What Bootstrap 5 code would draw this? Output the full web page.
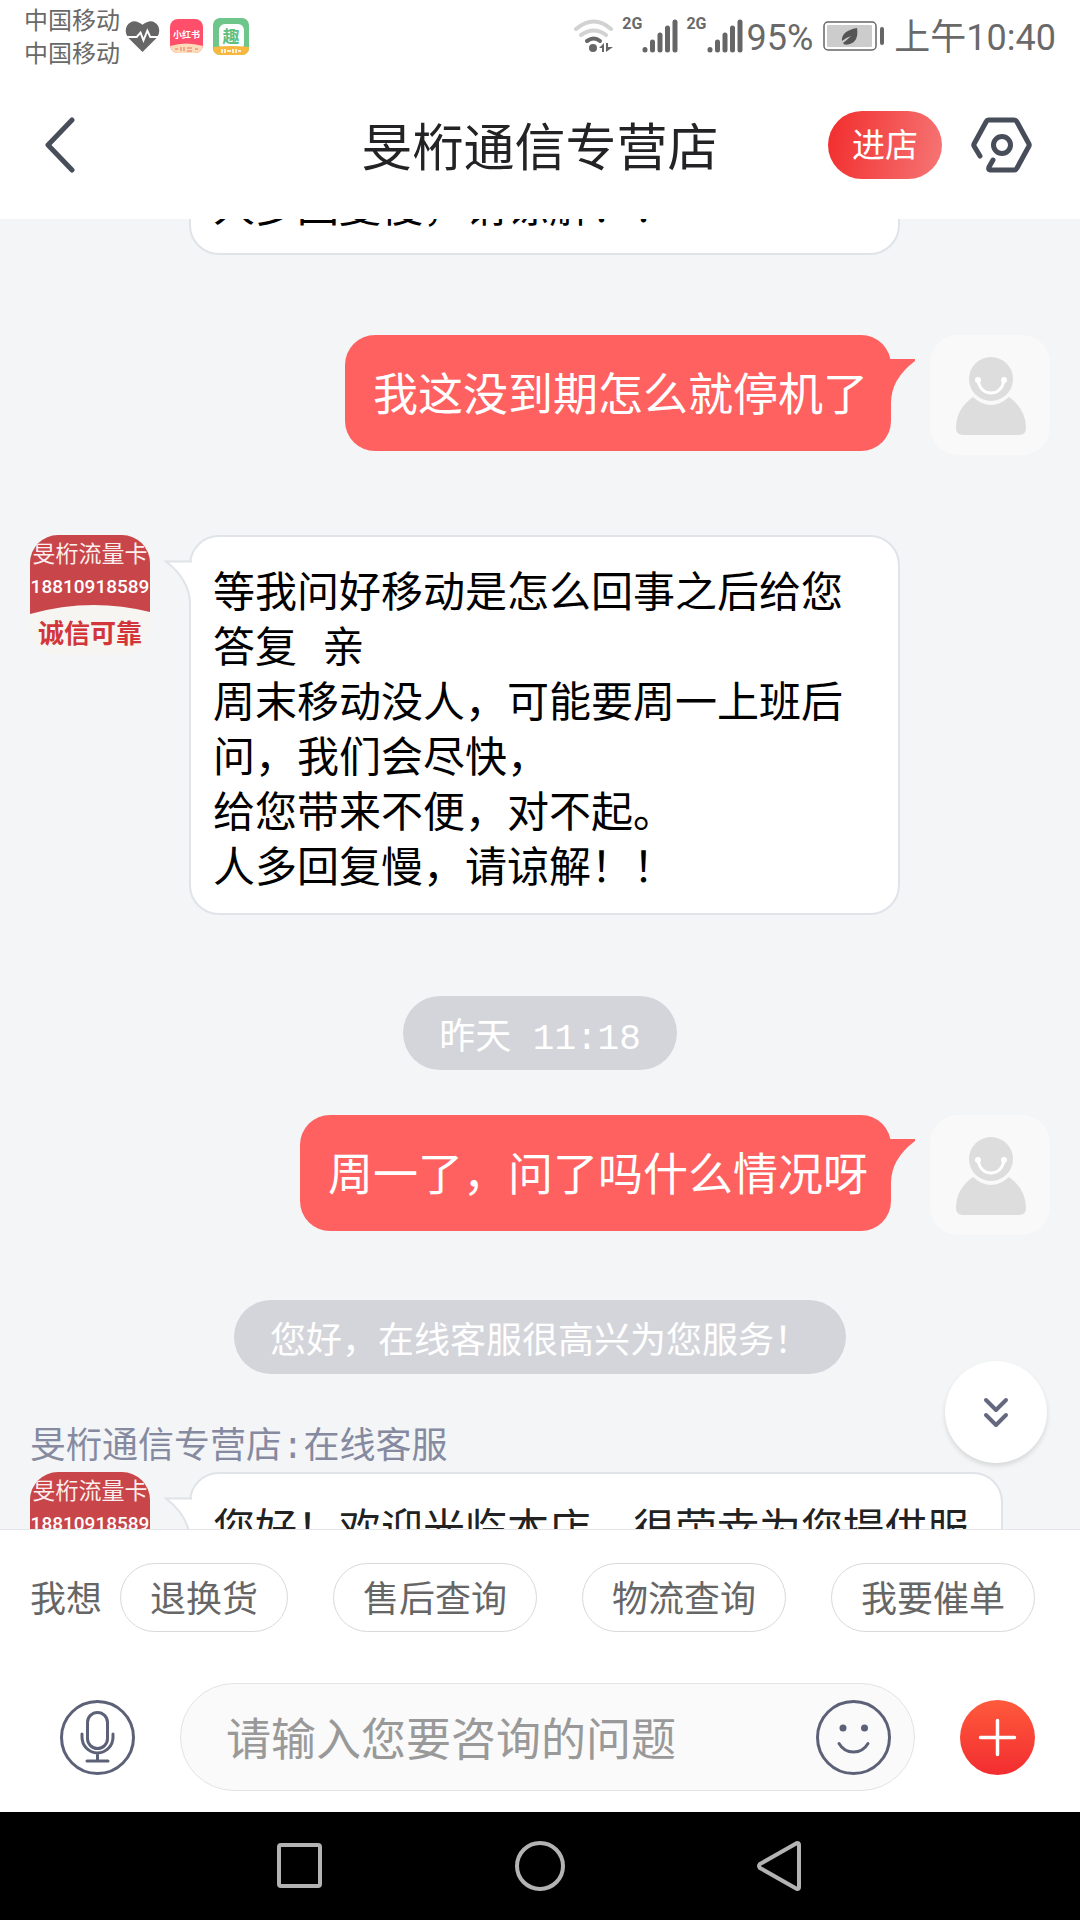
<!DOCTYPE html>
<html lang="zh-CN">
<head>
<meta charset="utf-8">
<meta name="viewport" content="width=device-width, initial-scale=1">
<title>旻桁通信专营店</title>
<link href="https://cdn.jsdelivr.net/npm/bootstrap@5.3.0/dist/css/bootstrap.min.css" rel="stylesheet">
<style>
  body { font-family: Roboto, "Noto Sans CJK SC", sans-serif; background: #fff; color: #262626; }
  svg { display: block; flex: none; }
  .status-bar { height: 72px; padding: 0 24px; color: #696969; font-size: 36px; line-height: 54px; }
  .status-text { padding-top: 4px; }
  .carrier { font-size: 24px; line-height: 33px; padding-top: 4px; }
  .net-type { font-size: 16px; line-height: 16px; font-weight: 700; padding-top: 1px; }
  .gap-health { margin-left: 5px; }
  .gap-app { margin-left: 10px; }
  .battery { margin: 0 9px 0 10px; }
  .title-bar { height: 147px; padding: 0 48px 2px 44px; }
  .title-side { flex: 1 1 0; }
  .shop-title { font-size: 51px; line-height: 60px; font-weight: 400; color: #232326; padding: 8px 0 0 4px; }
  .enter-shop { font-size: 33px; line-height: 66px; padding: 2px 24px 0; color: #fff; border-radius: 34px; background: linear-gradient(100deg, #f23030 5%, #f67272 95%); }
  .settings-btn { margin-left: 29px; }
  .plain-btn { border: 0; background: none; padding: 0; }
  .chat { background: #f3f5f7; min-height: 0; overflow: hidden; font-family: "Liberation Mono", "Noto Sans CJK SC", monospace; }
  .msg { padding: 0 30px; }
  .msg + .msg, .msg + .tip { margin-top: 80px; }
  .bubble { border: 2px solid #e0e3e8; background: #fff; color: #000; border-radius: 30px; font-size: 42px; line-height: 55px; padding: 32px 22px 14px; max-width: 711px; }
  .bubble-wide { max-width: 814px; color: #222; }
  .bubble-mine { border: 0; background: #ff6161; color: #fff; font-size: 45px; line-height: 60px; padding: 35px 23px 21px 28px; margin-right: 39px; }
  .bubble-shop { margin-left: 39px; }
  .bubble-rest { margin-top: -69px; margin-left: 159px; }
  .tail { position: absolute; top: 22px; }
  .tail-left { left: -28px; }
  .tail-right { right: -24px; }
  .tip { align-self: center; border-radius: 37px; background: #d4d5db; color: #fff; font-size: 36px; line-height: 54px; padding: 17px 36px 3px; }
  .tip + .msg { margin-top: 45px; }
  .msg + .tip { margin-top: 81px; }
  .msg + .tip-hello { margin-top: 65px; }
  .sender { padding: 0 30px; margin-top: 52px; font-size: 36px; line-height: 46px; color: #858aa0; }
  .to-latest { position: absolute; right: 33px; bottom: 66px; width: 102px; height: 102px; background: #fff; box-shadow: 0 3px 5px rgba(0,0,0,.12); }
  .composer { border-top: 1px solid #e4e5e8; }
  .quick { padding: 33px 30px 0; font-size: 36px; color: #666; }
  .quick-label { line-height: 61px; padding-top: 6px; }
  .chips { gap: 45px; margin-left: 18px; }
  .chip { border: 1px solid #d9d9d9; background: #fff; color: #666; border-radius: 35px; padding: 6px 29px 0; line-height: 61px; white-space: nowrap; }
  .entry-row { padding: 51px 45px 21px 60px; gap: 45px; }
  .entry { height: 108px; border: 1px solid #e3e3e3; border-radius: 54px; background: #fafafa; padding: 0 23px 0 45px; }
  .entry input { border: 0; background: none; outline: 0; min-width: 0; font-size: 45px; line-height: 60px; padding: 7px 0 0; color: #262626; }
  .entry input::placeholder { color: #999; opacity: 1; }
  .nav-keys { background: #000; height: 108px; gap: 188px; }
</style>
</head>
<body>
<svg width="0" height="0" class="position-absolute" aria-hidden="true">
  <defs>
    <clipPath id="round"><rect width="120" height="120" rx="28"/></clipPath>
    <linearGradient id="plusFill" x1="0" y1="0" x2="0" y2="1"><stop offset="0" stop-color="#ff5a3c"/><stop offset="1" stop-color="#f22d30"/></linearGradient>
    <symbol id="shopAvatar" viewBox="0 0 120 120">
      <g clip-path="url(#round)">
        <rect width="120" height="120" fill="#f6f5f1"/>
        <path d="M0 0H120V77Q60 62 0 79Z" fill="#c84549"/>
        <g text-anchor="middle" font-family="'Noto Sans CJK SC', sans-serif">
          <text x="60" y="27" font-size="23" fill="#fbeeee">旻桁流量卡</text>
          <text x="60" y="58" font-size="19" font-weight="500" fill="#fff" font-family="Roboto, sans-serif">18810918589</text>
          <text x="60" y="108" font-size="26" font-weight="700" fill="#d2353a">诚信可靠</text>
        </g>
      </g>
    </symbol>
    <symbol id="userAvatar" viewBox="0 0 120 120">
      <rect width="120" height="120" rx="28" fill="#f9f9f9"/>
      <circle cx="61" cy="44" r="22" fill="#ddd"/>
      <path d="M43 62Q26 74 26 93Q26 100 33 100H89Q96 100 96 93Q96 74 79 62Q61 78 43 62Z" fill="#ddd"/>
      <path d="M48 46Q51 58 61 58Q71 58 74 46" fill="none" stroke="#fff" stroke-width="3"/>
      <circle cx="48" cy="45" r="3" fill="#fff"/><circle cx="74" cy="45" r="3" fill="#fff"/>
    </symbol>
    <symbol id="bars" viewBox="0 0 36 34">
      <g stroke="#666" stroke-width="5" stroke-linecap="round"><path d="M3 30.500V31M10.500 23V31M18 16V31M25.500 9V31M33 3V31"/></g>
    </symbol>
    <symbol id="tailLeft" viewBox="0 0 32 46">
      <path d="M32 3H3Q26 22 28 44H32Z" fill="#fff"/>
      <path d="M29 2.500H3Q26 20 27 44" fill="none" stroke="#e0e3e8" stroke-width="2"/>
    </symbol>
    <symbol id="tailRight" viewBox="0 0 28 46"><path d="M0 2H28V4Q4 22 4 46H0Z" fill="#ff6161"/></symbol>
  </defs>
</svg>

<div class="d-flex flex-column vh-100 overflow-hidden">
  <header>
    <div class="status-bar d-flex align-items-center">
      <div class="carrier"><div>中国移动</div><div>中国移动</div></div>
      <svg class="gap-health" width="35" height="33" viewBox="0 0 36 34" role="img" aria-label="健康">
        <path d="M18 33L3 18Q-1 12 2 6Q8-3 18 5Q28-3 34 6Q37 12 33 18Z" fill="#666"/>
        <path d="M0 17.500H12L16 13L19 21L23 11L26 17.500H36" fill="none" stroke="#fff" stroke-width="2"/>
      </svg>
      <svg class="gap-app" width="33" height="34" viewBox="0 0 33 34" role="img" aria-label="小红书">
        <defs><clipPath id="c1"><rect width="33" height="34" rx="8"/></clipPath></defs>
        <g clip-path="url(#c1)"><rect width="33" height="34" fill="#ff4f6b"/><path d="M0 27Q16 22 33 27V34H0Z" fill="#fbdcb8"/></g>
        <text x="16.500" y="19" text-anchor="middle" font-size="9" font-weight="700" fill="#fff">小红书</text>
        <path d="M5 30H8M25 30H28M11 28V32M14 28V32M17 29H22M17 32H22" stroke="#f0705f" stroke-width="1"/>
      </svg>
      <svg class="gap-app" width="36" height="37" viewBox="0 0 36 37" role="img" aria-label="趣">
        <defs><clipPath id="c2"><rect width="36" height="37" rx="7"/></clipPath></defs>
        <g clip-path="url(#c2)"><rect width="36" height="37" fill="#6fc68b"/><rect x="6" y="6" width="25" height="26" rx="6" fill="#fff"/><path d="M0 29Q18 27 36 29V37H0Z" fill="#f8b73e"/></g>
        <text x="18" y="25" text-anchor="middle" font-size="17" font-weight="700" fill="#5fbf80">趣</text>
        <path d="M9 31V35M12 31V35M14 33H18M20 31V35M23 31V35M25 33H28" stroke="#fff" stroke-width="1.500"/>
      </svg>
      <div class="ms-auto d-flex align-items-center">
        <svg width="40" height="34" viewBox="0 0 40 34" role="img" aria-label="Wi-Fi">
          <g fill="none" stroke-width="4" stroke-linecap="round"><path d="M2 10Q20-5 37 10" stroke="#d2d2d2"/><path d="M7 16Q20 7 32 16" stroke="#d2d2d2"/><path d="M13 22Q20 17 26 22" stroke="#666"/></g>
          <circle cx="19" cy="29" r="4" fill="#666"/><path d="M25 29L30 24V33H28V29ZM32 24V33L39 28H34V24Z" fill="#666"/>
        </svg>
        <span class="net-type align-self-start mt-2 ms-2">2G</span><svg width="36" height="34"><use href="#bars"/></svg>
        <span class="net-type align-self-start mt-2 ms-2">2G</span><svg width="36" height="34"><use href="#bars"/></svg>
        <span class="status-text ms-1">95%</span>
        <svg class="battery" width="62" height="30" viewBox="0 0 62 30" role="img" aria-label="电池">
          <rect x="1" y="1" width="52" height="28" rx="4" fill="none" stroke="#666" stroke-width="1.500"/><rect x="4" y="4" width="45" height="22" rx="1" fill="#ccc"/>
          <rect x="57" y="6" width="4" height="18" rx="2" fill="#666"/>
          <path d="M34 7Q36 20 27 23Q21 25 20 22Q24 19 28 15Q22 17 19 20Q18 10 34 7Z" fill="#555"/>
        </svg>
        <span class="status-text">上午10:40</span>
      </div>
    </div>
    <nav class="title-bar d-flex align-items-center">
      <div class="title-side d-flex">
        <button class="plain-btn" aria-label="返回"><svg width="31" height="56" viewBox="0 0 31 56"><path d="M28 3L4 28L28 53" fill="none" stroke="#484d5a" stroke-width="5" stroke-linecap="round" stroke-linejoin="round"/></svg></button>
      </div>
      <h1 class="shop-title m-0">旻桁通信专营店</h1>
      <div class="title-side d-flex justify-content-end align-items-center">
        <button class="enter-shop border-0 text-nowrap">进店</button>
        <button class="plain-btn settings-btn" aria-label="设置"><svg width="61" height="56" viewBox="0 0 61 56"><g fill="none" stroke="#484d5a" stroke-width="5" stroke-linecap="round" stroke-linejoin="round"><path d="M9 39L3 29Q2.500 28 3 27L15 5Q16 3 18 3H43Q45 3 46 5L58 27Q58.500 28 58 29L46 51Q45 53 43 53H19Q17 53 18 50L22 43"/><circle cx="31" cy="28" r="8.500"/></g></svg></button>
      </div>
    </nav>
  </header>

  <main class="chat position-relative flex-grow-1 d-flex flex-column">
    <div class="msg d-flex"><div class="bubble bubble-rest flex-grow-1">人多回复慢，请谅解！！</div></div>

    <div class="msg d-flex justify-content-end align-items-start">
      <div class="bubble bubble-mine position-relative">我这没到期怎么就停机了<svg class="tail tail-right" width="28" height="46"><use href="#tailRight"/></svg></div>
      <svg width="120" height="120" role="img" aria-label="我"><use href="#userAvatar"/></svg>
    </div>

    <div class="msg d-flex align-items-start">
      <svg width="120" height="120" role="img" aria-label="店铺"><use href="#shopAvatar"/></svg>
      <div class="bubble bubble-shop position-relative"><svg class="tail tail-left" width="32" height="46"><use href="#tailLeft"/></svg>等我问好移动是怎么回事之后给您答复 亲<br>周末移动没人，可能要周一上班后问，我们会尽快，<br>给您带来不便，对不起。<br>人多回复慢，请谅解！！</div>
    </div>

    <div class="tip">昨天 11:18</div>

    <div class="msg d-flex justify-content-end align-items-start">
      <div class="bubble bubble-mine position-relative">周一了，问了吗什么情况呀<svg class="tail tail-right" width="28" height="46"><use href="#tailRight"/></svg></div>
      <svg width="120" height="120" role="img" aria-label="我"><use href="#userAvatar"/></svg>
    </div>

    <div class="tip tip-hello">您好，在线客服很高兴为您服务！</div>

    <div class="sender">旻桁通信专营店:在线客服</div>
    <div class="msg d-flex align-items-start">
      <svg width="120" height="120" role="img" aria-label="店铺"><use href="#shopAvatar"/></svg>
      <div class="bubble bubble-wide bubble-shop position-relative flex-grow-1"><svg class="tail tail-left" width="32" height="46"><use href="#tailLeft"/></svg>您好！欢迎光临本店，很荣幸为您提供服</div>
    </div>

    <button class="to-latest plain-btn rounded-circle d-flex align-items-center justify-content-center" aria-label="最新消息"><svg width="26" height="32" viewBox="0 0 26 32"><path d="M3 4L13 14L23 4M3 19L13 29L23 19" fill="none" stroke="#646980" stroke-width="4" stroke-linecap="round" stroke-linejoin="round"/></svg></button>
  </main>

  <footer>
    <div class="composer bg-white">
      <div class="quick d-flex align-items-center">
        <span class="quick-label text-nowrap">我想</span>
        <div class="chips d-flex">
          <button class="chip">退换货</button><button class="chip">售后查询</button><button class="chip">物流查询</button><button class="chip">我要催单</button>
        </div>
      </div>
      <div class="entry-row d-flex align-items-center">
        <button class="plain-btn" aria-label="语音"><svg width="75" height="75" viewBox="0 0 75 75"><g fill="none" stroke="#5c6177" stroke-width="3" stroke-linecap="round"><circle cx="37.500" cy="37.500" r="36"/><rect x="27.500" y="12.500" width="20" height="36" rx="10"/><path d="M22 34V37A15.500 16 0 0 0 53 37V34M37.500 53V61M27 61H48"/></g></svg></button>
        <div class="entry d-flex align-items-center flex-grow-1">
          <input class="flex-grow-1" type="text" placeholder="请输入您要咨询的问题" aria-label="请输入您要咨询的问题">
          <button class="plain-btn" aria-label="表情"><svg width="75" height="75" viewBox="0 0 75 75"><g fill="none" stroke="#5c6177" stroke-width="3" stroke-linecap="round"><circle cx="37.500" cy="37.500" r="36"/><path d="M23 43.500Q28 52 37.500 52Q47 52 52 43.500"/></g><g fill="#5c6177"><circle cx="27" cy="28" r="3.500"/><circle cx="48.500" cy="28" r="3.500"/></g></svg></button>
        </div>
        <button class="plain-btn" aria-label="更多"><svg width="75" height="75" viewBox="0 0 75 75"><circle cx="37.500" cy="37.500" r="37.500" fill="url(#plusFill)"/><path d="M37.500 20.500V54.500M20.500 37.500H54.500" stroke="#fff" stroke-width="3.500" stroke-linecap="round"/></svg></button>
      </div>
    </div>
    <div class="nav-keys d-flex justify-content-center align-items-center">
      <button class="plain-btn" aria-label="最近任务"><svg width="52" height="52" viewBox="0 0 52 52"><rect x="5" y="5" width="41" height="41" rx="2" fill="none" stroke="#b3b3b3" stroke-width="4"/></svg></button>
      <button class="plain-btn" aria-label="主页"><svg width="52" height="52" viewBox="0 0 52 52"><circle cx="26" cy="26" r="23" fill="none" stroke="#b3b3b3" stroke-width="4"/></svg></button>
      <button class="plain-btn" aria-label="返回上一页"><svg width="52" height="52" viewBox="0 0 52 52"><path d="M43 3L6 24Q4 26 6 28L43 49Q45 49 45 47V5Q45 3 43 3Z" fill="none" stroke="#b3b3b3" stroke-width="4" stroke-linejoin="round"/></svg></button>
    </div>
  </footer>
</div>
<script src="https://cdn.jsdelivr.net/npm/bootstrap@5.3.0/dist/js/bootstrap.bundle.min.js"></script>
</body>
</html>
